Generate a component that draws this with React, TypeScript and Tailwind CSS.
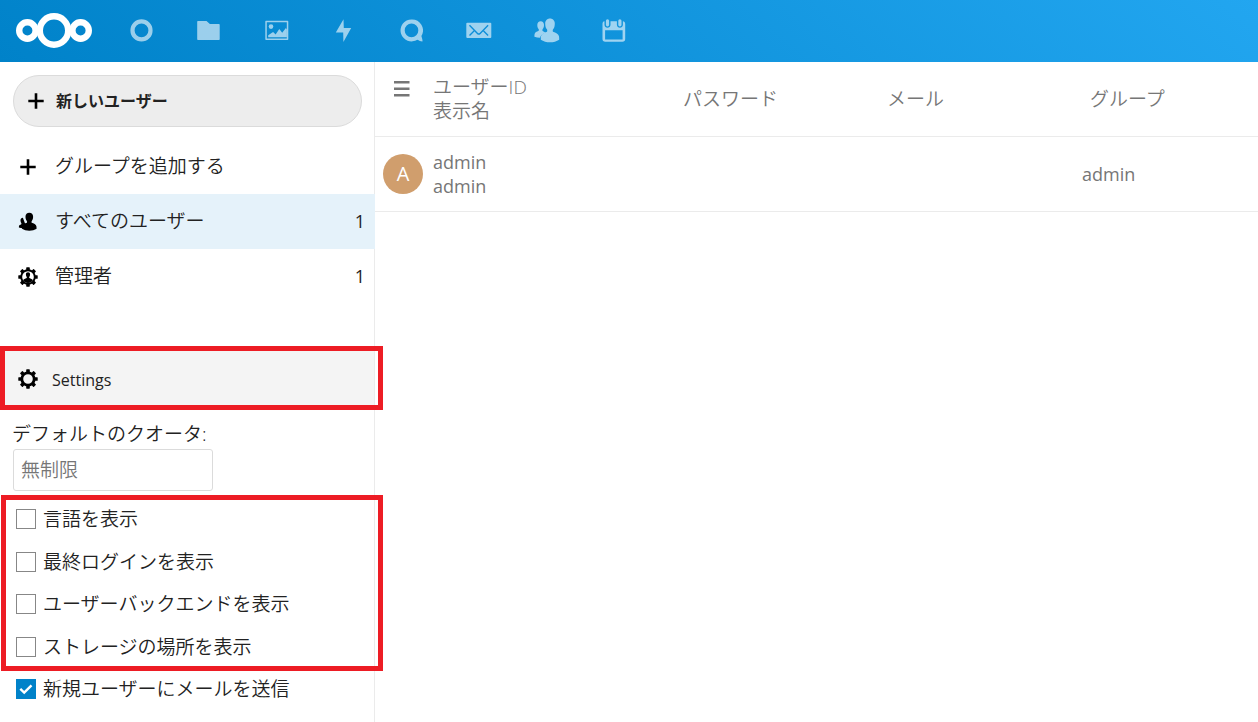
import React, { useState } from 'react';

type IconProps = { className?: string };

const DashboardIcon = () => (
  <svg viewBox="0 0 26 26" className="size-[26px]" fill="none" stroke="#fff" strokeWidth="4.2">
    <circle cx="12.5" cy="12.4" r="9" />
  </svg>
);

const FilesIcon = () => (
  <svg viewBox="0 0 26 26" className="size-[26px]" fill="#fff">
    <path d="M1.9 2.9h8.6l3.4 3.1h9.1c.4 0 .7.3.7.7v14.6c0 .4-.3.7-.7.7H1.9c-.4 0-.7-.3-.7-.7V3.6c0-.4.3-.7.7-.7z" />
  </svg>
);

const PhotosIcon = () => (
  <svg viewBox="0 0 26 26" className="size-[26px]" fill="#fff">
    <path fillRule="evenodd" d="M2 2.8h21.6c.4 0 .7.3.7.7v17.8c0 .4-.3.7-.7.7H2c-.4 0-.7-.3-.7-.7V3.5c0-.4.3-.7.7-.7zM2.8 4.3v16.2h20V4.3z" />
    <circle cx="7" cy="8.6" r="2.3" />
    <path d="M4.2 19.3v-2l4.9-3.2 2.5 2.5 3.7-5.500 2.900 3.600 3.700-4.600 1 1.400v7.800z" />
  </svg>
);

const ActivityIcon = () => (
  <svg viewBox="0 0 26 26" className="size-[26px]" fill="#fff">
    <path d="M12.5 1.2 4.8 14.6h7.4l.2 9.4 7.8-14h-7.4z" />
  </svg>
);

const TalkIcon = () => (
  <svg viewBox="0 0 26 26" className="size-[26px]" fill="#fff">
    <path fillRule="evenodd" d="M12.5 1.4a11 11 0 1 0 5.9 20.3c1.6.9 3.9 1.9 5 1.7.5-.5-.5-3.6-1-5.4A11 11 0 0 0 12.5 1.4zm0 4.2a6.8 6.8 0 1 1 0 13.6 6.8 6.8 0 0 1 0-13.6z" />
  </svg>
);

const MailIcon = () => (
  <svg viewBox="0 0 26 26" className="size-[26px]">
    <rect x=".3" y="4.7" width="25" height="15.4" rx="1" fill="#fff" />
    <path d="m3.5 7.2 8 8.2c.8.8 1.800.8 2.600 0l8-8.200M3.500 17.400l4.500-4.500M22.100 17.400l-4.500-4.500" fill="none" stroke="#0d8edb" strokeWidth="1.4" />
  </svg>
);

const ContactsIcon = () => (
  <svg viewBox="0 0 26 26" className="size-[26px]" fill="#fff">
    <path d="M6.700 3.300c-2.100 0-3.400 1.600-3.400 3.500 0 2 .4 3.300 1.300 4.300.4.500.3 1.200.1 1.700C2.600 13.600.9 14.500.6 16c-.2.900-.2 2-.2 2.700 1.700.6 3.600.9 5.700 1 .4-2.500 2.700-4 5.300-5-.8-.7-1.900-1.200-2.800-1.700-.3-.6-.3-1.300.1-1.900.900-1 1.300-2.300 1.300-4.300 0-1.900-1.300-3.500-3.300-3.500z" />
    <path d="M16 .6c-2.900 0-4.800 2.200-4.800 4.800 0 2.700.5 4.400 1.700 5.800.5.600.4 1.800.1 2.500-2.800 1-5.600 2.400-6 4.600-.2 1-.2 2.400-.2 3.400 2.600 1.700 5.700 2.600 9.200 2.600s6.600-.9 9.200-2.600c0-1 0-2.400-.2-3.400-.4-2.200-3.200-3.600-6-4.600-.3-.7-.4-1.900.1-2.500 1.200-1.400 1.700-3.100 1.700-5.800 0-2.600-1.900-4.800-4.800-4.800z" />
  </svg>
);

const CalendarIcon = () => (
  <svg viewBox="0 0 26 26" className="size-[26px]" fill="#fff">
    <rect x="4.900" y="1.200" width="3.200" height="7.200" rx="1.600" />
    <rect x="17.300" y="1.200" width="3.200" height="7.200" rx="1.600" />
    <path fillRule="evenodd" d="M3.500 3.300v3.500c0 4 6 4 6 0V3.300h6.400v3.500c0 4 6 4 6 0V3.300c1.400.2 2.300 1.200 2.300 2.700v15.100c0 1.700-1 2.700-2.700 2.700H4.200c-1.700 0-2.700-1-2.700-2.700V6c0-1.500.7-2.500 2-2.700zM4.100 12.200v9.200h17.500v-9.200z" />
  </svg>
);

const PlusIcon = () => (
  <svg viewBox="0 0 20 20" className="size-5 shrink-0" stroke="#000" strokeWidth="2.6">
    <path d="M10 2.3v15.4M2.3 10h15.4" />
  </svg>
);

const UsersIcon = () => (
  <svg viewBox="0 0 20 20" className="size-5 shrink-0" fill="#000">
    <path d="M4.9 5.7c-1.500 0-2.400 1.100-2.400 2.600 0 1.300.3 2 .8 2.800.2.300.1.700 0 1.100-1.200.5-2.200 1-2.300 1.900-.1.500-.1.900-.1 1.400 1.200.5 2.600.7 4 .7l5-3.200-2.700-1z" />
    <path d="M11.300.8C9 .8 7.500 2.400 7.500 4.500c0 2 .4 3.300 1.300 4.400.4.400.3 1.300.1 1.900-2.100.7-4.400 1.800-4.700 3.400-.1.700-.2 1.800-.2 2.500 2 1.300 4.400 2 7.300 2s5.300-.7 7.300-2c0-.7-.1-1.800-.2-2.500-.3-1.600-2.600-2.700-4.700-3.400-.2-.6-.3-1.500.1-1.900.9-1.100 1.300-2.400 1.300-4.400 0-2.100-1.500-3.700-3.800-3.700z" />
  </svg>
);

const GEAR_ANGLES = [0, 45, 90, 135, 180, 225, 270, 315];

const GearTeeth = () => (
  <>
    {GEAR_ANGLES.map(a => (
      <rect key={a} x="8.2" y=".3" width="3.6" height="3.2" rx=".6" transform={`rotate(${a} 10 10)`} />
    ))}
  </>
);

const GearIcon = () => (
  <svg viewBox="0 0 20 20" className="size-5 shrink-0" fill="#000">
    <GearTeeth />
    <circle cx="10" cy="10" r="6.2" fill="none" stroke="#000" strokeWidth="2.8" />
  </svg>
);

const AdminIcon = () => (
  <svg viewBox="0 0 20 20" className="size-5 shrink-0" fill="#000">
    <GearTeeth />
    <circle cx="10" cy="10" r="6.800" fill="none" stroke="#000" strokeWidth="1.900" />
    <path d="M10 5.200c-1.300 0-2.100.9-2.100 2.100 0 1.200.3 2 .8 2.600.2.300.2.700 0 1.100-1.500.5-3.100 1.100-3.600 2.300 1.200 1.700 2.900 2.700 4.900 2.700s3.700-1 4.900-2.700c-.5-1.200-2.100-1.800-3.600-2.300-.2-.4-.2-.8 0-1.100.5-.6.8-1.400.8-2.600 0-1.200-.8-2.100-2.100-2.100z" />
  </svg>
);

const Logo = ({ className }: IconProps) => (
  <svg viewBox="0 0 76 36" className={className} fill="none" stroke="#fff" strokeWidth="6.4">
    <circle cx="11.4" cy="17.5" r="8.2" />
    <circle cx="38" cy="17.5" r="14.2" />
    <circle cx="64.6" cy="17.5" r="8.2" />
  </svg>
);

const APPS = [
  { name: 'dashboard', Icon: DashboardIcon },
  { name: 'files', Icon: FilesIcon },
  { name: 'photos', Icon: PhotosIcon },
  { name: 'activity', Icon: ActivityIcon },
  { name: 'talk', Icon: TalkIcon },
  { name: 'mail', Icon: MailIcon },
  { name: 'contacts', Icon: ContactsIcon },
  { name: 'calendar', Icon: CalendarIcon }
];

const COLUMN_OPTIONS = [
  { id: 'language', label: '言語を表示' },
  { id: 'lastLogin', label: '最終ログインを表示' },
  { id: 'backend', label: 'ユーザーバックエンドを表示' },
  { id: 'storage', label: 'ストレージの場所を表示' }
];

interface CheckRowProps {
  id: string;
  label: string;
  checked: boolean;
  onToggle: (id: string) => void;
}

const CheckRow: React.FC<CheckRowProps> = ({ id, label, checked, onToggle }) => (
  <div className="flex items-center gap-[7px] pl-4">
    <span className="relative flex">
      <input
        id={id}
        type="checkbox"
        checked={checked}
        onChange={() => onToggle(id)}
        className="size-5 appearance-none border border-[#878787] bg-white checked:border-[#0082c9] checked:bg-[#0082c9]"
      />
      {checked && (
        <svg viewBox="0 0 20 20" className="pointer-events-none absolute inset-0 size-5" fill="none" stroke="#fff" strokeWidth="2.4">
          <path d="m4.300 9.800 3.900 3.800 7.300-7.300" />
        </svg>
      )}
    </span>
    <label htmlFor={id} className="leading-6">{label}</label>
  </div>
);

const App: React.FC = () => {
  const [options, setOptions] = useState<Record<string, boolean>>({ sendMail: true });
  const [quota, setQuota] = useState('');

  const toggleOption = (id: string) => {
    setOptions({ ...options, [id]: !options[id] });
  };

  return (
    <div lang="ja" className="flex min-h-screen flex-col bg-white font-['Open_Sans','Noto_Sans_CJK_JP',sans-serif] text-[19px] font-[350] text-[#222]">
      {/* App bar */}
      <header className="flex h-[62px] items-center bg-linear-[40deg,#0082c9,#22a6f0]">
        <a href="#home" className="w-[108px] pl-4">
          <Logo className="h-9 w-[76px]" />
        </a>
        <nav className="grid w-[540px] grid-cols-8">
          {APPS.map(({ name, Icon }) => (
            <a key={name} href={`#${name}`} className="flex justify-center opacity-60">
              <Icon />
            </a>
          ))}
        </nav>
      </header>

      <div className="flex flex-1">
        {/* Sidebar */}
        <aside className="w-[375px] shrink-0 border-r border-[#ebebeb] pt-[13px]">
          <div className="pr-3 pl-[13px]">
            <button className="flex h-[52px] w-full items-center gap-2.5 rounded-full border border-[#dbdbdb] bg-[#ededed] pl-3 text-base font-bold">
              <PlusIcon />
              新しいユーザー
            </button>
          </div>

          <nav className="mt-3">
            <a href="#add-group" className="flex h-[55px] items-center gap-[17px] pr-2.5 pl-[18px]">
              <PlusIcon />
              グループを追加する
            </a>
            <a href="#everyone" className="-mr-px flex h-[55px] items-center gap-[17px] bg-[#e5f2fa] pr-2.5 pl-[18px]">
              <UsersIcon />
              <span className="flex-1">すべてのユーザー</span>
              <span className="text-[18px] font-normal">1</span>
            </a>
            <a href="#admins" className="-mr-px flex h-[55px] items-center gap-[17px] pr-2.5 pl-[18px]">
              <AdminIcon />
              <span className="flex-1">管理者</span>
              <span className="text-[18px] font-normal">1</span>
            </a>
          </nav>

          {/* Settings panel */}
          <div className="relative mt-[42px]">
            <button className="flex h-16 w-full items-center gap-3.5 bg-[#f4f4f4] pt-0.5 pl-[18px] text-base font-normal">
              <GearIcon />
              <span className="pt-0.5">Settings</span>
            </button>
            <div className="pointer-events-none absolute inset-y-0 left-0 w-[383px] border-[5px] border-[#ed1c24]" />
          </div>

          <div className="flex flex-col items-start px-3 pt-3">
            <label htmlFor="quota" className="leading-6">デフォルトのクオータ:</label>
            <input
              id="quota"
              value={quota}
              onChange={e => setQuota(e.target.value)}
              placeholder="無制限"
              className="mt-[3px] ml-px h-[42px] w-[200px] rounded-[3px] border border-[#dbdbdb] px-[7px] placeholder:text-[#767676]"
            />
          </div>

          <div className="relative mt-[7px] grid h-[170px] grid-rows-4">
            {COLUMN_OPTIONS.map(o => (
              <CheckRow key={o.id} id={o.id} label={o.label} checked={!!options[o.id]} onToggle={toggleOption} />
            ))}
            <div className="pointer-events-none absolute -inset-y-[3px] left-px w-[382px] border-[5px] border-[#ed1c24]" />
          </div>
          <div className="grid h-[42px]">
            <CheckRow id="sendMail" label="新規ユーザーにメールを送信" checked={!!options.sendMail} onToggle={toggleOption} />
          </div>
        </aside>

        {/* User list */}
        <main className="min-w-0 flex-1">
          <table className="w-full table-fixed text-left leading-6 text-[#767676]">
            <thead>
              <tr className="h-[74px] border-b border-[#ebebeb]">
                <th className="w-[58px] pt-4 pl-[19px] align-top">
                  <button className="flex" aria-label="menu">
                    <svg viewBox="0 0 16 20" className="h-5 w-4" fill="#767676">
                      <path d="M0 3h15.5v2.5H0zM0 9.5h15.5V12H0zM0 16h15.5v2.5H0z" />
                    </svg>
                  </button>
                </th>
                <th className="w-[242px] font-[350]">
                  <div>ユーザーID</div>
                  <div>表示名</div>
                </th>
                <th className="w-[204px] pl-2 font-[350]">パスワード</th>
                <th className="w-[203px] pl-2 font-[350]">メール</th>
                <th className="pl-2 font-[350]">グループ</th>
              </tr>
            </thead>
            <tbody className="text-[18px] font-normal">
              <tr className="h-[75px] border-b border-[#ebebeb]">
                <td className="pl-2">
                  <div className="flex size-10 items-center justify-center rounded-full bg-[#d09e6d] text-[20px] text-white">A</div>
                </td>
                <td>
                  <div>admin</div>
                  <div>admin</div>
                </td>
                <td />
                <td />
                <td>admin</td>
              </tr>
            </tbody>
          </table>
        </main>
      </div>
    </div>
  );
};

export default App;
